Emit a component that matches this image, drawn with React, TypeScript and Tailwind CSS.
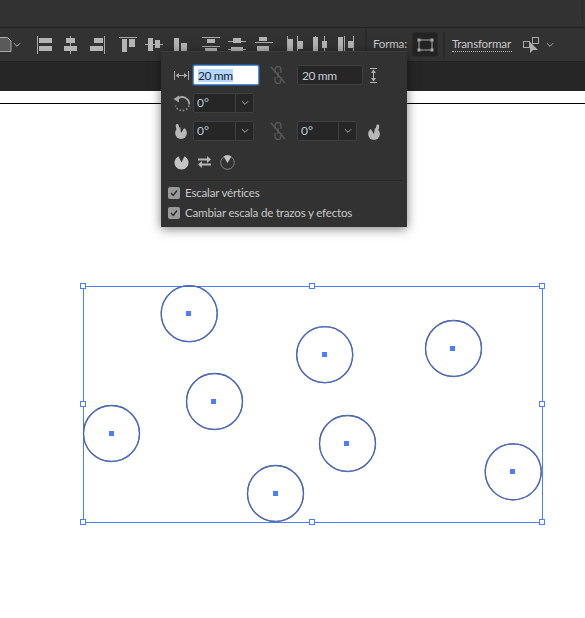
import { ReactNode } from "react";

type Bar = [number, number, number, number];

// rects for the align / distribute buttons, each in a 20x20 box
const lines: Bar[][] = [
  [[1, 1, 1, 18]],
  [[7, 1, 1, 18]],
  [[14, 1, 1, 18]],
  [[1, 2, 18, 1]],
  [[0, 9, 18, 1]],
  [[2, 18, 16, 1]],
  [[1, 2, 18, 1], [1, 11, 18, 1]],
  [[0, 6, 18, 1], [0, 14, 18, 1]],
  [[0, 7, 18, 1], [0, 18, 18, 1]],
  [[2, 1, 1, 17], [12, 1, 1, 17]],
  [[4, 1, 1, 17], [13, 1, 1, 17]],
  [[7, 1, 1, 17], [16, 1, 1, 17]],
];

const bars: Bar[][] = [
  [[3, 3, 13, 5], [3, 11, 13, 5]],
  [[3, 3, 9, 5], [1, 11, 13, 5]],
  [[4, 3, 9, 5], [0, 11, 13, 5]],
  [[4, 4, 5, 13], [11, 4, 6, 8]],
  [[3, 3, 5, 13], [10, 5, 5, 8]],
  [[2, 3, 5, 13], [9, 8, 6, 8]],
  [[6, 4, 8, 4], [4, 13, 12, 5]],
  [[5, 3, 8, 5], [3, 12, 12, 5]],
  [[4, 2, 8, 4], [2, 11, 12, 5]],
  [[3, 4, 5, 12], [13, 6, 5, 8]],
  [[2, 2, 5, 14], [11, 6, 5, 7]],
  [[1, 2, 5, 14], [11, 6, 5, 7]],
];

const circles = [
  [189.2, 313.7, 188.5, 313.5],
  [324.7, 354.7, 324.5, 354.5],
  [453.5, 348.5, 452.5, 348.5],
  [214.5, 401.5, 213.5, 401.5],
  [111.5, 433.5, 111.5, 433.5],
  [347.5, 443.5, 346.5, 443.5],
  [275.5, 493.5, 275.5, 493.5],
  [513.2, 471.8, 512.5, 471.5],
];

const handles = [
  [83, 286], [312, 286], [542, 286],
  [83, 404], [542, 404],
  [83, 522], [312, 522], [542, 522],
];

function AlignIcon({ index }: { index: number }) {
  return (
    <svg width="20" height="20" viewBox="0 0 20 20" className="shrink-0 overflow-visible">
      {lines[index].map(([x, y, w, h], i) => (
        <rect key={i} x={x} y={y} width={w} height={h} fill="#a8a8a8" />
      ))}
      {bars[index].map(([x, y, w, h], i) => (
        <rect key={i} x={x} y={y} width={w} height={h} fill="#b4b4b4" />
      ))}
    </svg>
  );
}

function Chevron({ className }: { className?: string }) {
  return (
    <svg width="8" height="6" viewBox="0 0 9 6" className={className}>
      <path d="M1 1l3.5 3.5L8 1" fill="none" stroke="#b0b0b0" strokeWidth="1.1" />
    </svg>
  );
}

function LinkIcon() {
  return (
    <svg width="16" height="18" viewBox="0 0 16 18" className="shrink-0">
      <g fill="none" stroke="#595959" strokeWidth="1.3">
        <path d="M5 7V3.5a3 3 0 0 1 6 0V7" />
        <path d="M5 11v3.5a3 3 0 0 0 6 0V11" />
        <path d="M8 6v6" />
        <path d="M1 1l14 16" />
      </g>
    </svg>
  );
}

function SizeInput({ children }: { children: ReactNode }) {
  return (
    <div className="flex h-5 w-[66px] items-center rounded-[2px] border border-[#3f3f3f] bg-[#262626] pl-[4px] text-[12px] leading-[13px] tracking-[-0.4px] text-[#c4cdd6]">
      {children}
    </div>
  );
}

function AngleSelect({ width }: { width: string }) {
  return (
    <div className={`flex h-5 items-center rounded-[2px] border border-[#3f3f3f] bg-[#262626] text-[12px] text-[#b9cbdd] ${width}`}>
      <span className="flex-1 pl-[3px]">0°</span>
      <span className="flex h-full w-[18px] items-center justify-center border-l border-[#3f3f3f]">
        <Chevron />
      </span>
    </div>
  );
}

function Check({ label }: { label: string }) {
  return (
    <div className="flex h-5 items-center gap-[5px]">
      <span className="flex h-3 w-3 items-center justify-center rounded-[2px] bg-[#9a9a9a]">
        <svg width="10" height="10" viewBox="0 0 10 10">
          <path d="M2 5l2.2 2.4L8 2.5" fill="none" stroke="#303030" strokeWidth="1.5" />
        </svg>
      </span>
      <span className="text-[11.6px] leading-none tracking-[-0.2px] text-[#c8c8c8]">{label}</span>
    </div>
  );
}

function PiePanel() {
  return (
    <div className="absolute left-[161px] top-[51px] flex h-[176px] w-[246px] flex-col border-t border-[#3c3c3c] bg-[#323232] pl-[12px] pr-[6px] pt-[13px] shadow-[0_2px_10px_rgba(0,0,0,0.5)]">
      {/* width / height */}
      <div className="flex h-5 items-center">
        <svg width="15" height="9" viewBox="0 0 15 9" className="ml-[1px] shrink-0">
          <path d="M.5 0v9M14.5 0v9M2 4.5h11" stroke="#a8a8a8" fill="none" />
          <path d="M1.5 4.5L5 2v5zM13.5 4.5L10 2v5z" fill="#a8a8a8" />
        </svg>
        <div className="ml-[4px] flex h-5 w-[66px] items-center rounded-[2px] border border-[#4a90e2] bg-white pl-[4px] text-[12px] leading-[13px] tracking-[-0.4px] text-[#20262c] shadow-[0_0_0_1px_rgba(74,144,226,0.35)]">
          <span className="bg-[#b3d7ff]">20 mm</span>
        </div>
        <div className="ml-[11px]">
          <LinkIcon />
        </div>
        <div className="ml-[11px]">
          <SizeInput>20 mm</SizeInput>
        </div>
        <svg width="9" height="15" viewBox="0 0 9 15" className="ml-[6px] shrink-0">
          <path d="M1 .5h7M1 14.5h7M4.5 2v11" stroke="#b4b4b4" fill="none" />
          <path d="M4.5 1.5L7 5H2zM4.5 13.5L2 10h5z" fill="#b4b4b4" />
        </svg>
      </div>

      {/* rotation */}
      <div className="mt-[8px] flex h-5 items-center">
        <svg width="18" height="17" viewBox="0 0 18 17" className="mr-[2px] shrink-0">
          <path d="M5 3.5A7 7 0 0 1 16.2 9.5" fill="none" stroke="#a8a8a8" strokeWidth="1.8" />
          <path d="M16 10.5A7 7 0 0 1 2.5 10.5" fill="none" stroke="#909090" strokeWidth="1.6" strokeDasharray="1.6 1.8" />
          <path d="M0.5 4L6 0.5v7z" fill="#a8a8a8" />
        </svg>
        <AngleSelect width="w-[61px]" />
      </div>

      {/* pie start / end */}
      <div className="mt-[8px] flex h-5 items-center">
        <svg width="14" height="17" viewBox="0 0 14 17" className="ml-[1px] mr-[5px] shrink-0">
          <circle cx="7" cy="10" r="5.9" fill="#b8b8b8" />
          <path d="M7 10L6 3h5.5z" fill="#323232" />
          <path d="M3.2 2.6L3.6 5" stroke="#b8b8b8" strokeWidth="3" strokeLinecap="round" fill="none" />
        </svg>
        <AngleSelect width="w-[61px]" />
        <div className="ml-[16px]">
          <LinkIcon />
        </div>
        <div className="ml-[11px]">
          <AngleSelect width="w-[60px]" />
        </div>
        <svg width="14" height="17" viewBox="0 0 14 17" className="ml-[10px] shrink-0">
          <circle cx="7" cy="11" r="5.9" fill="#b8b8b8" />
          <path d="M7 11L8 4H2.5z" fill="#323232" />
          <path d="M10.8 3L10.4 5.5" stroke="#b8b8b8" strokeWidth="3" strokeLinecap="round" fill="none" />
        </svg>
      </div>

      {/* invert pie */}
      <div className="ml-[1px] mt-[12px] flex h-[18px] items-center">
        <svg width="15" height="15" viewBox="0 0 15 15" className="shrink-0">
          <path d="M7.5 7.5L4.5 1.2a7 7 0 1 0 6 0z" fill="#c4c4c4" />
        </svg>
        <svg width="15" height="12" viewBox="0 0 15 12" className="ml-[8px] shrink-0">
          <path d="M1 2.5h9V0l4 3.5-4 3.5V4.5H1z" fill="#b8b8b8" />
          <path d="M14 7.5H5V5L1 8.5l4 3.5V9.5h9z" fill="#b8b8b8" />
        </svg>
        <svg width="15" height="15" viewBox="0 0 15 15" className="ml-[8px] shrink-0">
          <circle cx="7.5" cy="7.5" r="6.8" fill="none" stroke="#808080" strokeWidth="1" />
          <path d="M7.5 8L3.6 1.6a7 7 0 0 1 7.8 0z" fill="#c4c4c4" />
        </svg>
      </div>

      <div className="-ml-[5px] mt-[9px] h-px w-[234px] bg-[#262626]" />

      <div className="-ml-[5px] mt-[2px] flex flex-col">
        <Check label="Escalar vértices" />
        <Check label="Cambiar escala de trazos y efectos" />
      </div>
    </div>
  );
}

function ControlBar() {
  return (
    <div className="flex h-[34px] items-center border-t border-[#222222] bg-[#323232] text-[11.6px] tracking-[-0.2px] text-[#c8c8c8]">
      {/* cut off shape picker */}
      <svg width="12" height="15" viewBox="0 0 12 15" className="shrink-0">
        <path d="M-2 .5h9.5L11 4v10.5H-2z" fill="#5a5a5a" stroke="#a8a8a8" />
      </svg>
      <Chevron className="ml-[1px]" />
      <div className="ml-[15px] flex items-center gap-[7px]">
        <AlignIcon index={0} />
        <AlignIcon index={1} />
        <AlignIcon index={2} />
      </div>
      <div className="ml-[8px] flex items-center gap-[7px]">
        <AlignIcon index={3} />
        <AlignIcon index={4} />
        <AlignIcon index={5} />
      </div>
      <div className="ml-[9px] flex items-center gap-[7px]">
        <AlignIcon index={6} />
        <AlignIcon index={7} />
        <AlignIcon index={8} />
      </div>
      <div className="ml-[10px] flex items-center gap-[6px]">
        <AlignIcon index={9} />
        <AlignIcon index={10} />
        <AlignIcon index={11} />
      </div>
      <div className="ml-[8px] h-full w-[2px] bg-[#2a2a2a]" />
      <span className="ml-[6px] w-[33px] whitespace-nowrap border-b border-dotted border-[#b0b0b0] leading-[14px]">Forma:</span>
      <div className="ml-[6px] flex h-[25px] w-[26px] items-center justify-center rounded-[3px] border border-[#2a2a2a] bg-[#232323]">
        <svg width="17" height="14" viewBox="0 0 17 14">
          <rect x="2" y="2" width="13" height="10" fill="none" stroke="#a8a8a8" />
          <g fill="#a8a8a8">
            <rect x="0.5" y="0.5" width="3" height="3" />
            <rect x="13.5" y="0.5" width="3" height="3" />
            <rect x="0.5" y="10.5" width="3" height="3" />
            <rect x="13.5" y="10.5" width="3" height="3" />
          </g>
        </svg>
      </div>
      <div className="ml-[5px] h-[26px] w-[2px] bg-[#2a2a2a]" />
      <span className="ml-[7px] w-[60px] whitespace-nowrap border-b border-dotted border-[#b0b0b0] leading-[14px]">Transformar</span>
      <svg width="18" height="17" viewBox="0 0 18 17" className="ml-[11px] shrink-0">
        <rect x="0.5" y="5.5" width="6" height="6" fill="none" stroke="#a8a8a8" />
        <rect x="9.5" y="1.5" width="6" height="6" fill="none" stroke="#a8a8a8" />
        <path d="M7 6v11l3-3h5z" fill="#b0b0b0" />
      </svg>
      <Chevron className="ml-[5px]" />
    </div>
  );
}

function Artwork() {
  return (
    <svg width="585" height="514" viewBox="0 104 585 514" className="block">
      <rect x="83.5" y="286.5" width="459" height="236" fill="none" stroke="#4a7dff" />
      {circles.map(([cx, cy, dx, dy], i) => (
        <g key={i}>
          <circle cx={cx} cy={cy} r="28" fill="none" stroke="#555555" strokeWidth="1.3" />
          <circle cx={cx} cy={cy} r="28" fill="none" stroke="#3f72f5" strokeWidth="1.2" strokeDasharray="6 2" />
          <rect x={dx - 2.5} y={dy - 2.5} width="5" height="5" fill="#4a7dff" />
        </g>
      ))}
      {handles.map(([x, y], i) => (
        <rect key={i} x={x - 2.5} y={y - 2.5} width="5" height="5" fill="white" stroke="#4a7dff" />
      ))}
    </svg>
  );
}

export default function App() {
  return (
    <div className="relative flex h-[618px] w-[585px] flex-col overflow-hidden bg-white font-[Lato,sans-serif]">
      <div className="flex h-[27px] justify-end bg-[#323232] pb-[7px] pr-[2px]">
        <div className="w-px bg-[#2a2a2a]" />
      </div>
      <ControlBar />
      <div className="h-[30px] border-t border-[#222222] bg-[#262626]" />
      <div className="flex-1 bg-white pt-[12px]">
        <div className="h-px bg-black" />
        <Artwork />
      </div>
      <PiePanel />
    </div>
  );
}
